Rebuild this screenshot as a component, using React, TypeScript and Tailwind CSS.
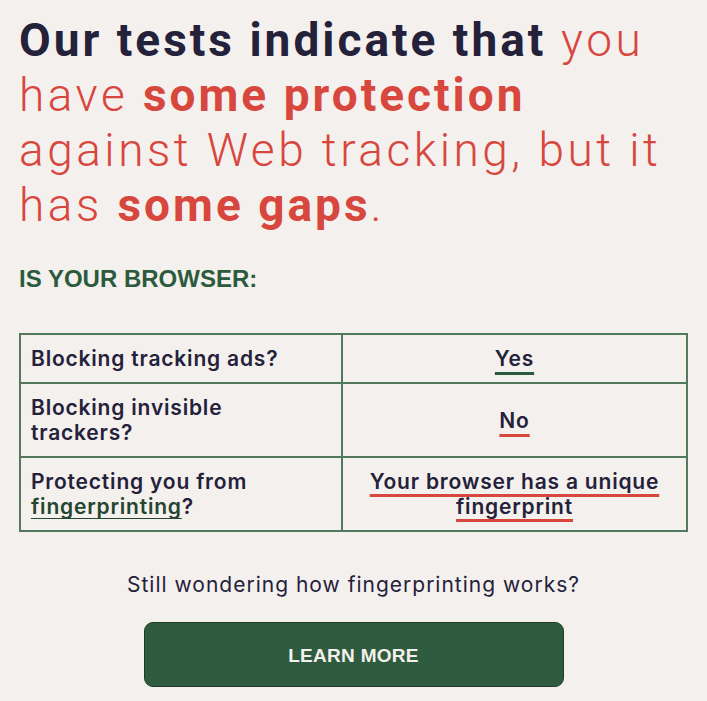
export default function App() {
  return (
    <div className="min-h-[701px] w-full bg-[#f4f0ed] px-[19px] pt-[13px] pb-[14px] font-['Inter',sans-serif] text-[#24213a]">
      <h1 className="font-['Roboto',sans-serif] text-[46px] leading-[55px] font-light tracking-[3.5px] text-[#d8473d]">
        <span className="font-bold tracking-[3px] text-[#24213a]">Our tests indicate that</span> you
        <br />
        have <span className="font-bold tracking-[3px]">some protection</span>
        <br />
        against Web tracking, but it
        <br />
        has <span className="font-bold tracking-[3px]">some gaps</span>.
      </h1>

      <h2 className="mt-[32px] font-['Liberation_Sans',sans-serif] text-[24px] leading-[28px] font-bold text-[#2c5a3c]">
        IS YOUR BROWSER:
      </h2>

      <div className="mt-[40px] grid grid-cols-[322px_1fr] border-2 border-[#52795d] text-[21px] leading-[25px] font-semibold tracking-[0.8px]">
        <div className="border-r-2 border-b-2 border-[#52795d] px-[10px] py-[11px]">Blocking tracking ads?</div>
        <div className="flex items-center justify-center border-b-2 border-[#52795d] px-[10px] py-[11px]">
          <span className="underline decoration-[#2c5a3c] decoration-[3px] underline-offset-[6px]">Yes</span>
        </div>

        <div className="border-r-2 border-b-2 border-[#52795d] px-[10px] py-[11px]">
          Blocking invisible
          <br />
          trackers?
        </div>
        <div className="flex items-center justify-center border-b-2 border-[#52795d] px-[10px] py-[11px]">
          <span className="underline decoration-[#d8473d] decoration-[3px] underline-offset-[6px]">No</span>
        </div>

        <div className="border-r-2 border-[#52795d] px-[10px] py-[11px]">
          Protecting you from
          <br />
          <a href="#" className="text-[#24452f] underline decoration-[1px] underline-offset-[4px]">
            fingerprinting
          </a>
          ?
        </div>
        <div className="flex items-center justify-center px-[10px] py-[11px] text-center">
          <span className="underline decoration-[#d8473d] decoration-[3px] underline-offset-[5px]">
            Your browser has a unique fingerprint
          </span>
        </div>
      </div>

      <p className="mt-[39px] text-center text-[21px] leading-[28px] font-normal tracking-[1px]">
        Still wondering how fingerprinting works?
      </p>

      <div className="mt-[23px] flex justify-center">
        <button
          type="button"
          className="h-[65px] w-[420px] rounded-[9px] border border-[#1e3b28] bg-[#2f5c3e] pt-[3px] font-['Liberation_Sans',sans-serif] text-[19px] font-bold tracking-[0.3px] text-[#f4f0ed]"
        >
          LEARN MORE
        </button>
      </div>
    </div>
  );
}
